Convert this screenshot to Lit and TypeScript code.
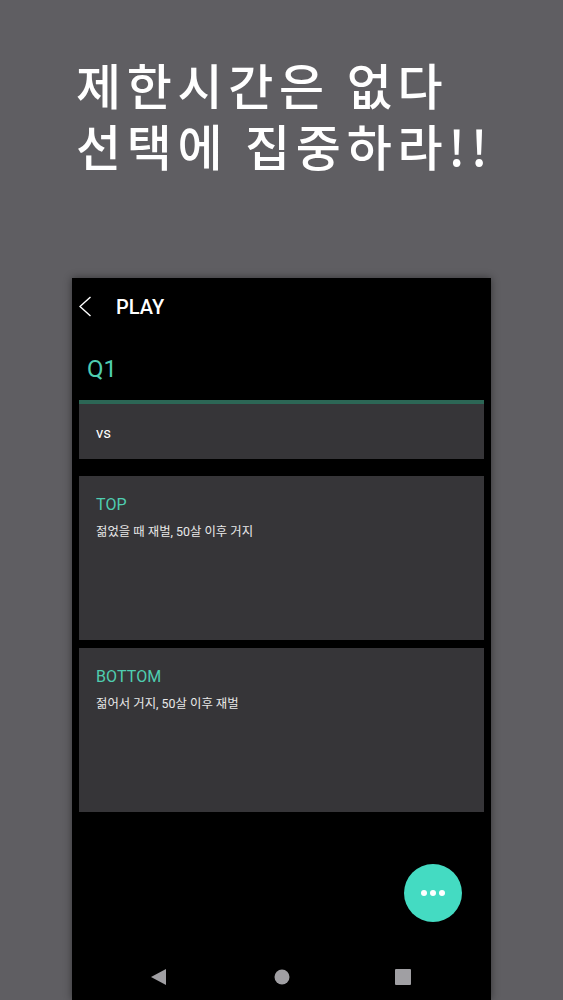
import { LitElement, html, css } from "lit";
import { customElement } from "lit/decorators.js";

@customElement("app-root")
export class AppRoot extends LitElement {
  static styles = css`
    :host { display: block; width: 563px; height: 1000px; overflow: hidden; background: #5f5e62; font-family: Roboto, "Noto Sans CJK KR", sans-serif; color: #fff; }
    .page { height: 1000px; display: flex; flex-direction: column; align-items: flex-start; }
    .hero { height: 278px; box-sizing: border-box; padding: 53px 0 0 76px; font-family: "Noto Sans CJK KR", sans-serif; font-weight: 500; font-size: 49px; line-height: 61px; letter-spacing: 5.7px; white-space: nowrap; flex: none; }
    .hero div { height: 61px; }
    .phone { position: relative; margin-left: 72px; width: 419px; height: 722px; box-sizing: border-box; background: #000; box-shadow: 0 0 8px rgba(0,0,0,.45); padding: 0 7px; display: flex; flex-direction: column; flex: none; }
    .bar { height: 58px; display: flex; align-items: center; flex: none; }
    .back { width: 14px; height: 22px; flex: none; }
    .bar span { margin-left: 23px; font-size: 20px; font-weight: 500; }
    .q { height: 64px; box-sizing: border-box; padding: 19px 0 0 8px; font-size: 24px; line-height: 28px; color: #4fcdb0; flex: none; }
    .card { background: #363538; box-sizing: border-box; padding: 18px 17px; flex: none; }
    .vs { height: 59px; border-top: 4px solid #2c6655; padding: 3px 17px 0; display: flex; align-items: center; font-size: 15px; margin-bottom: 17px; }
    .opt { height: 164px; margin-bottom: 8px; }
    .opt h3 { margin: 0; font-size: 16px; font-weight: 400; line-height: 22px; color: #4fcdb0; letter-spacing: .1px; }
    .opt p { margin: 7px 0 0; font-size: 12.4px; line-height: 17px; color: #e8e8e8; }
    .fab { position: absolute; left: 332px; top: 586px; width: 58px; height: 58px; border-radius: 50%; background: #44dbc2; display: flex; align-items: center; justify-content: center; gap: 3px; }
    .fab i { width: 6px; height: 6px; border-radius: 50%; background: #fff; }
    .nav { margin-top: auto; height: 32px; box-sizing: border-box; padding: 0 0 0 72px; display: flex; align-items: flex-start; flex: none; }
    .nav svg { flex: none; }
    .n1 { width: 16px; height: 18px; }
    .n2 { width: 16px; height: 16px; margin: 1px 0 0 107px; }
    .n3 { width: 16px; height: 16px; margin: 1px 0 0 105px; }
  `;

  render() {
    return html`<div class="page">
      <div class="hero"><div>제한시간은 없다</div><div>선택에 집중하라!!</div></div>
      <div class="phone">
        <div class="bar">
          <svg class="back" viewBox="0 0 14 22"><path d="M11.5 1 1 10.5 11.5 20" fill="none" stroke="#fff" stroke-width="1.4"/></svg>
          <span>PLAY</span>
        </div>
        <div class="q">Q1</div>
        <div class="card vs">vs</div>
        <div class="card opt"><h3>TOP</h3><p>젊었을 때 재벌, 50살 이후 거지</p></div>
        <div class="card opt"><h3>BOTTOM</h3><p>젊어서 거지, 50살 이후 재벌</p></div>
        <div class="nav">
          <svg class="n1" viewBox="0 0 16 18"><path d="M15 1v16L0 9z" fill="#a09fa3"/></svg>
          <svg class="n2" viewBox="0 0 16 16"><circle cx="8" cy="8" r="7.5" fill="#a09fa3"/></svg>
          <svg class="n3" viewBox="0 0 16 16"><rect width="16" height="16" rx="1" fill="#a09fa3"/></svg>
        </div>
        <div class="fab"><i></i><i></i><i></i></div>
      </div>
    </div>`;
  }
}
